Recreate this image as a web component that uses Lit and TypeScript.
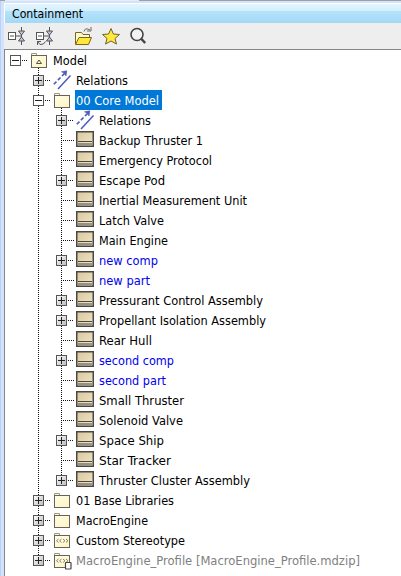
import { LitElement, html, svg, css } from "lit";
import { customElement } from "lit/decorators.js";

type Kind = "model" | "relations" | "folder" | "part" | "stereo" | "linked";
interface Row { level: number; kind: Kind; text: string; w: number; box?: "+" | "-"; tone?: string; end?: boolean; }

const rows: Row[] = [
  { level: 0, kind: "model", text: "Model", w: 34, box: "-" },
  { level: 1, kind: "relations", text: "Relations", w: 52, box: "+" },
  { level: 1, kind: "folder", text: "00 Core Model", w: 83, box: "-", tone: "selected" },
  { level: 2, kind: "relations", text: "Relations", w: 52, box: "+" },
  { level: 2, kind: "part", text: "Backup Thruster 1", w: 104 },
  { level: 2, kind: "part", text: "Emergency Protocol", w: 113 },
  { level: 2, kind: "part", text: "Escape Pod", w: 66, box: "+" },
  { level: 2, kind: "part", text: "Inertial Measurement Unit", w: 148 },
  { level: 2, kind: "part", text: "Latch Valve", w: 65 },
  { level: 2, kind: "part", text: "Main Engine", w: 69 },
  { level: 2, kind: "part", text: "new comp", w: 59, box: "+", tone: "blue" },
  { level: 2, kind: "part", text: "new part", w: 51, tone: "blue" },
  { level: 2, kind: "part", text: "Pressurant Control Assembly", w: 164, box: "+" },
  { level: 2, kind: "part", text: "Propellant Isolation Assembly", w: 167, box: "+" },
  { level: 2, kind: "part", text: "Rear Hull", w: 53 },
  { level: 2, kind: "part", text: "second comp", w: 75, box: "+", tone: "blue" },
  { level: 2, kind: "part", text: "second part", w: 67, tone: "blue" },
  { level: 2, kind: "part", text: "Small Thruster", w: 85 },
  { level: 2, kind: "part", text: "Solenoid Valve", w: 84 },
  { level: 2, kind: "part", text: "Space Ship", w: 65, box: "+" },
  { level: 2, kind: "part", text: "Star Tracker", w: 72 },
  { level: 2, kind: "part", text: "Thruster Cluster Assembly", w: 151, box: "+", end: true },
  { level: 1, kind: "folder", text: "01 Base Libraries", w: 98, box: "+" },
  { level: 1, kind: "folder", text: "MacroEngine", w: 72, box: "+" },
  { level: 1, kind: "stereo", text: "Custom Stereotype", w: 109, box: "+" },
  { level: 1, kind: "linked", text: "MacroEngine_Profile [MacroEngine_Profile.mdzip]", w: 284, box: "+", tone: "muted", end: true },
];

const folder = svg`<path d="M1.5 5V3.5H6.5V5" fill="#fffbe0" stroke="#a39a78"/><rect x="1.5" y="5.5" width="15" height="12" fill="url(#fold)" stroke="#66645a"/>`;
const chevrons = svg`<path d="M5.5 9L3.5 10.75L5.5 12.5M8.5 9L6.5 10.75L8.5 12.5M10 9L12 10.75L10 12.5M13 9L15 10.75L13 12.5" fill="none" stroke="#77756a" stroke-width=".9"/>`;

const glyph = (kind: Kind) => {
  switch (kind) {
    case "model": return svg`${folder}<path d="M6.5 13.5L9 10L11.5 13.5Z" fill="#fff9cc" stroke="#55534a"/>`;
    case "folder": return folder;
    case "stereo": return svg`${folder}${chevrons}`;
    case "linked": return svg`${folder}${chevrons}<rect x="12.5" y="12.5" width="5.5" height="6.5" rx=".5" fill="#fff" stroke="#444" stroke-width="1.2"/>`;
    case "relations": return svg`<path d="M5 19L17.5 5.5" stroke="#4a5cb8" stroke-width="1.5"/><path d="M.8 14.3L12 3" stroke="#4a5cb8" stroke-width="1.6" stroke-dasharray="3.8 2"/><path d="M8.5 1.8L13.8 .8L13 6L11.5 3.3Z" fill="#4a5cb8" stroke="#4a5cb8" stroke-width=".6"/>`;
    default: return svg`<rect x=".75" y="1.75" width="16.5" height="14.5" fill="url(#tan)" stroke="#4b4744" stroke-width="1.5"/><path d="M2 11.5H16M2 14H16" stroke="#4b4744"/>`;
  }
};

@customElement("tree-row")
class TreeRow extends LitElement {
  static properties = { row: { attribute: false } };
  declare row: Row;
  static styles = css`
    :host { display: flex; height: 20px; }
    svg { display: block; flex: none; overflow: visible; }
    .dots { stroke: #111; stroke-dasharray: 1 1; shape-rendering: crispEdges; }
    .label { fill: #000; font: 12.4px "DejaVu Sans Condensed", "DejaVu Sans", sans-serif; font-stretch: condensed; }
    .blue { fill: #0000f0; }
    .muted { fill: #808080; }
    .selected { fill: #fff; }
    .hi { fill: #0078d7; }
  `;
  render() {
    const r = this.row;
    const bx = 10 + r.level * 23;
    const left = [25, 48, 71][r.level];
    const boxX = bx - 5;
    return html`
      <svg width=${left} height="20">
        ${r.level > 0 ? svg`<path class="dots" d="M33.5 0V${r.level === 1 && r.end ? 10 : 20}"/>` : ""}
        ${r.level > 1 ? svg`<path class="dots" d="M56.5 0V${r.end ? 10 : 20}"/>` : ""}
        ${r.level < 2 && r.box === "-" ? svg`<path class="dots" d="M${bx + 23.5} 18V20"/>` : ""}
        <path class="dots" d="M${r.box ? bx + 7 : bx} 10.5H${bx + 13}"/>
        ${r.box ? svg`<defs><linearGradient id="b" x2="1" y2="1"><stop stop-color="#fff"/><stop offset="1" stop-color=${r.box === "+" ? "#bbb" : "#fff"}/></linearGradient></defs>
          <rect x=${boxX + 0.5} y="5.5" width="10" height="10" fill="url(#b)" stroke="#555"/>
          <path d="M${boxX + 2} 10.5h7${r.box === "+" ? "m-3.5 -3.5v7" : ""}" stroke="#222"/>` : ""}
      </svg>
      <svg width="22" height="20">
        <defs><linearGradient id="tan" x2="1" y2="1"><stop stop-color="#d9c79b"/><stop offset="1" stop-color="#f1e7cb"/></linearGradient>
        <linearGradient id="fold" x2="1" y2="1"><stop stop-color="#fffde8"/><stop offset="1" stop-color="#fff4c0"/></linearGradient></defs>
        ${glyph(r.kind)}
      </svg>
      <svg width=${r.w + 4} height="20">
        ${r.tone === "selected" ? svg`<rect class="hi" x="0" y="0" width=${r.w + 4} height="20"/>` : ""}
        <text class="label ${r.tone ?? ""}" x="1" y="15" textLength=${r.w} lengthAdjust="spacingAndGlyphs">${r.text}</text>
      </svg>`;
  }
}

@customElement("app-root")
class AppRoot extends LitElement {
  static styles = css`
    :host { display: flex; flex-direction: column; box-sizing: border-box; width: 401px; height: 576px; overflow: hidden; background: linear-gradient(90deg, #a0a0a0 5px, #e4ecf8 5px, #e4ecf8 139px, #a0a0a0 139px) 0 0 / 100% 1px no-repeat, linear-gradient(90deg, #b9d3f8 1px, #d3e2fd 1px); padding: 3px 0 0 4px; }
    .title { height: 20px; box-sizing: border-box; flex: none; border-top: 1px solid #fff; border-left: 1px solid #fff; background: linear-gradient(#e2f5fe 0, #d3effd 7px, #b6e3fb 7px, #a3d9f5 100%); }
    .bar { height: 26px; flex: none; background: #eee; }
    .tree { flex: 1; background: #fff; border-top: 1px solid #84868a; border-left: 1px solid #84868a; }
    svg { display: block; }
    .cap { font: 12.4px "DejaVu Sans Condensed", "DejaVu Sans", sans-serif; font-stretch: condensed; }
  `;
  render() {
    const pin = svg`<rect x="4.5" y="9.5" width="7" height="7" fill="#fff" stroke="#555"/><path d="M6 13H10M12 13H17M17.5 4V22" stroke="#555"/><path d="M14.5 8H20.5L17.5 12ZM14.5 18H20.5L17.5 14Z" fill="#c4c4ec" stroke="#555"/>`;
    return html`
      <div class="title"><svg width="200" height="19"><text class="cap" x="7" y="14" textLength="71" lengthAdjust="spacingAndGlyphs">Containment</text></svg></div>
      <div class="bar"><svg width="180" height="26">
        ${pin}
        <g transform="translate(28 0)">${pin}<path d="M5.500 18.500V22M9 18.500H5.500L8 21.500Q12 22 13.500 18.500" fill="none" stroke="#555"/></g>
        <path d="M71.5 21V9.5H77.5L79 11.5H85.5V14" fill="#fff9d0" stroke="#7a6520"/><path d="M71.5 21.5L75 14.5H87.5L84.5 21.5Z" fill="#ffe83a" stroke="#7a6520"/><path d="M80 8.5Q81 4 86 7M87 4V8H83" fill="none" stroke="#666"/>
        <path d="M107 5.500L109.400 11L115.500 11.500L111 15.500L112.500 21L107 18L101.500 21L103 15.500L98.500 11.500L104.600 11Z" fill="#ffe93e" stroke="#6d6330"/>
        <circle cx="133" cy="11.500" r="6" fill="#f3f3f3" stroke="#444" stroke-width="1.600"/><path d="M137 15.500L141.200 20" stroke="#444" stroke-width="2.500"/>
      </svg></div>
      <div class="tree">${rows.map((r) => html`<tree-row .row=${r}></tree-row>`)}</div>`;
  }
}
